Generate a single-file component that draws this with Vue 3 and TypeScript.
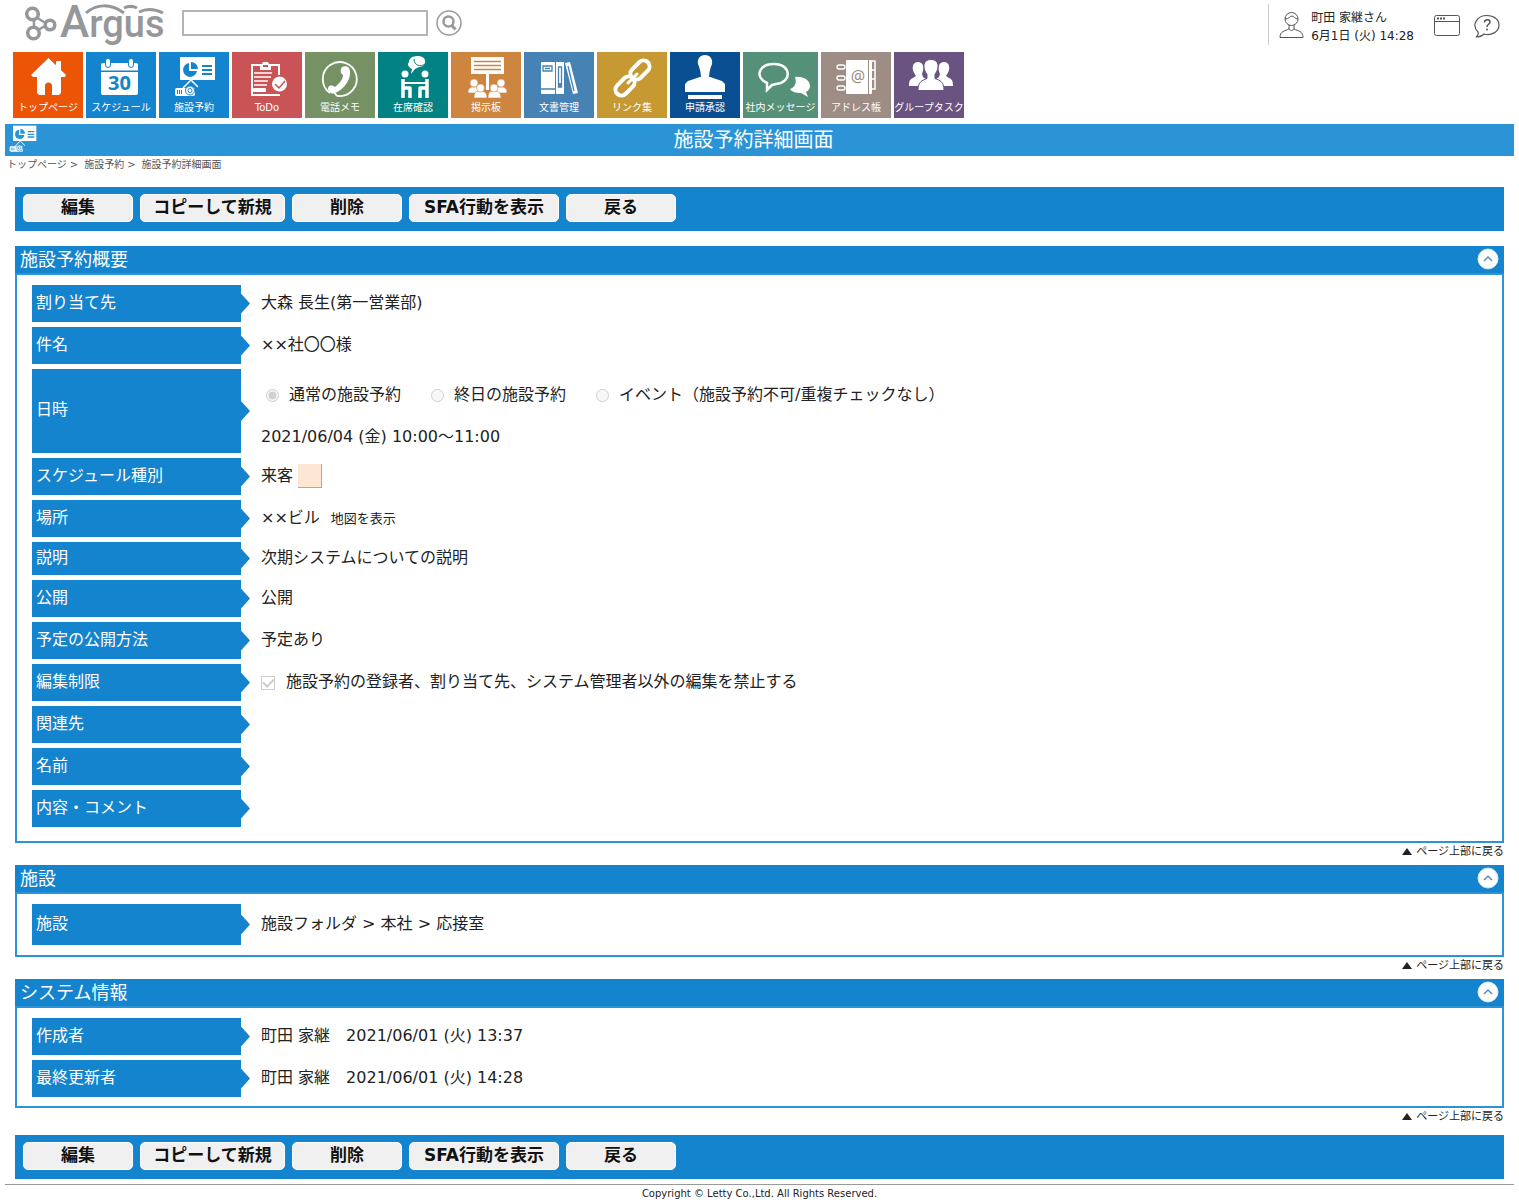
<script setup lang="ts">
import { ref } from 'vue'

interface NavItem { id: string; label: string; color: string; wide?: boolean }
interface Row { label: string; kind?: string; value?: string }
interface Section { id: string; title: string; rows: Row[] }

const keyword = ref('')

const navItems: NavItem[] = [
  { id: 'home', label: 'トップページ', color: '#eb5505' },
  { id: 'calendar', label: 'スケジュール', color: '#1584ce' },
  { id: 'facility', label: '施設予約', color: '#1584ce' },
  { id: 'todo', label: 'ToDo', color: '#c95355' },
  { id: 'phone', label: '電話メモ', color: '#769164' },
  { id: 'presence', label: '在席確認', color: '#028282' },
  { id: 'board', label: '掲示板', color: '#cd853f' },
  { id: 'docs', label: '文書管理', color: '#4682b4' },
  { id: 'link', label: 'リンク集', color: '#c79932' },
  { id: 'stamp', label: '申請承認', color: '#0b4f93' },
  { id: 'message', label: '社内メッセージ', color: '#559079', wide: true },
  { id: 'address', label: 'アドレス帳', color: '#9e8d85' },
  { id: 'group', label: 'グループタスク', color: '#6a5380' },
]

const actions = [
  { label: '編集', size: 'short' },
  { label: 'コピーして新規', size: 'medium' },
  { label: '削除', size: 'short' },
  { label: 'SFA行動を表示', size: 'long' },
  { label: '戻る', size: 'short' },
]

const dateKinds = ['通常の施設予約', '終日の施設予約', 'イベント（施設予約不可/重複チェックなし）']

const sections: Section[] = [
  {
    id: 'summary',
    title: '施設予約概要',
    rows: [
      { label: '割り当て先', value: '大森 長生(第一営業部)' },
      { label: '件名', value: '××社〇〇様' },
      { label: '日時', kind: 'date', value: '2021/06/04 (金) 10:00～11:00' },
      { label: 'スケジュール種別', kind: 'color', value: '来客' },
      { label: '場所', kind: 'place', value: '××ビル' },
      { label: '説明', kind: 'note', value: '次期システムについての説明' },
      { label: '公開', value: '公開' },
      { label: '予定の公開方法', value: '予定あり' },
      { label: '編集制限', kind: 'limit', value: '施設予約の登録者、割り当て先、システム管理者以外の編集を禁止する' },
      { label: '関連先' },
      { label: '名前' },
      { label: '内容・コメント' },
    ],
  },
  { id: 'facility', title: '施設', rows: [{ label: '施設', kind: 'tall', value: '施設フォルダ > 本社 > 応接室' }] },
  {
    id: 'system',
    title: 'システム情報',
    rows: [
      { label: '作成者', value: '町田 家継　2021/06/01 (火) 13:37' },
      { label: '最終更新者', value: '町田 家継　2021/06/01 (火) 14:28' },
    ],
  },
]

const closed = ref<string[]>([])
function toggle(id: string) {
  closed.value = closed.value.includes(id) ? closed.value.filter((c) => c !== id) : [...closed.value, id]
}
</script>

<template>
  <div id="top" class="page">
    <svg class="defs" width="0" height="0" aria-hidden="true">
      <symbol id="projector" viewBox="15 4 42 42">
        <path fill="#fff" d="M21 5h35v23H21z" />
        <path fill="var(--tile)" d="M30 11v8h8a7 7 0 1 1-8-8z M32 10a7 7 0 0 1 7 7h-7z" />
        <path stroke="var(--tile)" stroke-width="2" d="M43 14h10M43 18h10M43 22h10" />
        <path stroke="#fff" stroke-width="1.500" fill="none" d="M32 28l-8 8M32 28l7 7" />
        <rect x="16" y="36" width="20" height="8" rx="2" fill="#fff" />
        <circle cx="31" cy="38.500" r="4.500" fill="#fff" stroke="var(--tile)" />
        <circle cx="31" cy="38.500" r="2" fill="none" stroke="var(--tile)" />
        <path stroke="var(--tile)" d="M18.500 38v4M20.500 38v4M22.500 38v4" />
      </symbol>
    </svg>

    <header class="header">
      <a href="#top" class="logo" aria-label="Argus">
        <svg width="144" height="52" viewBox="0 0 144 52">
          <g fill="none" stroke="#96979b" stroke-width="3.500">
            <circle cx="8.500" cy="14" r="5.800" />
            <circle cx="26" cy="25" r="4.800" />
            <circle cx="9.500" cy="33" r="5.800" />
            <path stroke-width="2.500" d="M13.500 18l8 5M14 30l7-4M10 20v7" />
            <path stroke-width="3" d="M62 13C72 4 86 3 100 13" />
            <path stroke-width="3" d="M100 8c4-2 9-2 13 0" />
            <path stroke-width="3" d="M115 12c8-4 16-3 24 1" />
          </g>
          <text x="36" y="37" class="logo-text"><tspan font-size="44">A</tspan><tspan font-size="38">rgus</tspan></text>
        </svg>
      </a>
      <form class="search" role="search" @submit.prevent>
        <input v-model="keyword" type="text" aria-label="検索" class="search-box" />
        <button type="submit" class="icon-button" aria-label="検索する">
          <svg width="26" height="26" viewBox="0 0 26 26" fill="none" stroke="#999">
            <circle cx="13" cy="13" r="12" stroke-width="1.500" />
            <circle cx="12.500" cy="11.500" r="5" stroke-width="2.500" />
            <path stroke-width="3" d="M15.500 15l4 4.500" />
          </svg>
        </button>
      </form>
      <div class="account">
        <svg width="25" height="28" viewBox="0 0 25 28" fill="none" stroke="#555">
          <circle cx="12.500" cy="8" r="6.500" />
          <path d="M6 8c4 0 5-3 7-3s3 3 6 3M10 14v4c-4 2-9 2-9 8.500h23c0-6.500-5-6.500-9-8.500v-4M10 18c2 2 3 2 5 0" />
        </svg>
        <div class="who"><span>町田 家継さん</span><span>6月1日 (火) 14:28</span></div>
        <button type="button" class="icon-button window" aria-label="ウィンドウ">
          <svg width="26" height="22" viewBox="0 0 26 22" fill="none" stroke="#555">
            <rect x=".5" y=".5" width="25" height="20" rx="2" />
            <path d="M1 6.500h24" />
            <path stroke-width="2" stroke-dasharray="2 1" d="M3 3.500h8" />
          </svg>
        </button>
        <button type="button" class="icon-button help" aria-label="ヘルプ">
          <svg width="26" height="26" viewBox="0 0 26 26" fill="none" stroke="#555">
            <path stroke-width="1.200" d="M4 18C-3 11 3 1.500 13 1.500c7 0 12 4 12 9.500 0 7-8 11-15 9-2 2-5 3-8 3 2-1 2.500-3 2-5z" />
            <path stroke-width="1.500" d="M10.500 8.500c0-4 5.500-3.500 5.500-.5 0 2.500-3 2-3 5M13 14.500v2" />
          </svg>
        </button>
      </div>
    </header>

    <nav class="nav">
      <a
        v-for="item in navItems" :key="item.id" href="#top" class="tile"
        :class="{ wide: item.wide }" :style="{ '--tile': item.color }"
      >
        <svg class="tile-icon" width="70" height="48" viewBox="0 0 70 48" fill="#fff" aria-hidden="true">
          <template v-if="item.id === 'home'">
            <path d="M35.500 6L53 23l-1 2h-4v16l-2 2h-7V34a3.500 3.500 0 0 0-7 0v9h-6l-2-2V25h-4l-2-2z M43 9h5v10l-5-5z" />
          </template>
          <template v-else-if="item.id === 'calendar'">
            <rect x="15" y="11" width="37" height="32" rx="2" />
            <path :fill="item.color" d="M15 18.500h37v1.500H15z" />
            <g :stroke="item.color"><rect x="19.500" y="6.500" width="5" height="9" rx="2.500" /><rect x="42.500" y="6.500" width="5" height="9" rx="2.500" /></g>
            <text x="33.500" y="38" text-anchor="middle" class="cal" :fill="item.color">30</text>
          </template>
          <use v-else-if="item.id === 'facility'" href="#projector" x="15" y="4" width="42" height="42" />
          <template v-else-if="item.id === 'todo'">
            <path fill="none" stroke="#fff" stroke-width="2" d="M28 13h-8v30h28M39 13h8v10" />
            <path fill-rule="evenodd" d="M28 12h2l1-2h5l1 2h2v6H28zM31 13v2h5v-2z" />
            <path stroke="#fff" stroke-width="1.500" d="M22 21h18M22 25h17M22 29h14M22 33h13" />
            <rect x="21" y="36" width="13" height="4" rx="1" />
            <circle cx="47.500" cy="32" r="7.500" />
            <path fill="none" :stroke="item.color" stroke-width="1.500" d="M43 32l4 4 6-7" />
          </template>
          <template v-else-if="item.id === 'phone'">
            <path fill="none" stroke="#fff" stroke-width="1.800" d="M25 41a17 17 0 1 1 8 3c-3 0-2-3-4-4" />
            <path d="M36 17c0-3 6-4 8-1 4 9-4 21-14 25-3 2-7-1-7-5 1-3 4-3 7-1 5-4 8-8 8-12-2-1-3-4-2-6z" />
          </template>
          <template v-else-if="item.id === 'presence'">
            <circle cx="27" cy="22" r="3.500" /><circle cx="47" cy="22" r="3.500" />
            <path d="M40 4c5 0 8 3 7 7-1 3-4 4-6 4l-4 2-4 5 1-5c-4-2-5-5-3-7 0-4 4-6 9-6z" />
            <path fill="none" :stroke="item.color" d="M36 7c0 7 7 8 11 5" />
            <path fill="none" stroke="#fff" stroke-width="3.500" stroke-linejoin="round" d="M25 27v9h7v10M49 27v9h-7v10M25 36v10M49 36v10" />
            <path stroke="#fff" stroke-width="2" d="M26 31h22" />
          </template>
          <template v-else-if="item.id === 'board'">
            <path d="M20 5h33v17H38v16h-3V22H20z" />
            <path :stroke="item.color" stroke-width="1.500" d="M23 9.500h27M23 13.500h27M23 17.500h27" />
            <g :stroke="item.color" stroke-width=".6">
              <path d="M17 41c0-5 2-6 6-6s6 1 6 6zM44 41c0-5 2-6 6-6s6 1 6 6z" />
              <circle cx="23" cy="31" r="4" /><circle cx="50" cy="31" r="4" />
              <path d="M23 46c0-6 2-7 6-7s7 1 7 7zM37 46c0-6 2-7 6-7s7 1 7 7z" />
              <circle cx="29.500" cy="36" r="4" /><circle cx="43" cy="36" r="4" />
            </g>
          </template>
          <template v-else-if="item.id === 'docs'">
            <rect x="17" y="10" width="14" height="32" rx="1" />
            <path d="M32 10h8v32h-8zM41 11l5-1 8 31-5 1z" />
            <path fill="none" :stroke="item.color" stroke-width="1.300" d="M19 14h9v5h-9zM21 16.500h5M17 37h14M34.500 15h3v20h-3zM44 14l6 25" />
            <circle cx="36" cy="33" r="2" :fill="item.color" />
          </template>
          <g v-else-if="item.id === 'link'" fill="none" stroke="#fff" stroke-width="4">
            <rect x="-11" y="-6" width="22" height="12" rx="6" transform="translate(28 34) rotate(-45)" />
            <rect x="-11" y="-6" width="22" height="12" rx="6" transform="translate(43 18) rotate(-45)" />
            <path stroke-linecap="round" stroke-width="3" d="M31 31l9-9" />
          </g>
          <template v-else-if="item.id === 'stamp'">
            <path d="M35 3c5 0 8 4 7 9-2 5-3 9-3 15h-8c0-6-1-10-3-15-1-5 2-9 7-9zM18 29l12-4h10l12 4 3 3v8H15v-8zM18 43h34v4H18z" />
          </template>
          <template v-else-if="item.id === 'message'">
            <path d="M44 37c5-2 7-6 5-12 8-1 15 3 15 9 0 3-2 5-4 6l2 5-7-4c-5 0-9-1-11-4z" />
            <path :fill="item.color" stroke="#fff" stroke-width="2.500" d="M28 12c18 0 18 19 2 20l-4 1-5 5v-7c-13-6-8-19 7-19z" />
          </template>
          <template v-else-if="item.id === 'address'">
            <rect x="25" y="8" width="26" height="34" rx="1" />
            <path fill="none" stroke="#fff" stroke-width="1.500" d="M51 9h3v9h-3M51 18h3v9h-3M51 27h3v10h-3" />
            <path :stroke="item.color" d="M47.500 8v34" />
            <g :fill="item.color" stroke="#fff" stroke-width="1.300"><rect x="16" y="13" width="8" height="4" rx="2" /><rect x="16" y="24" width="8" height="4" rx="2" /><rect x="16" y="34" width="8" height="4" rx="2" /></g>
            <text x="37" y="30" text-anchor="middle" font-size="16" :fill="item.color" class="latin">@</text>
          </template>
          <template v-else>
            <path d="M24 10c5 0 7 5 4 12l1 3 4 3v6H15c0-5 1-7 4-8l3-2c-6-8-3-14 2-14zM50 10c-5 0-7 5-4 12l-1 3-4 3v6h18c0-5-1-7-4-8l-3-2c6-8 3-14-2-14z" />
            <path :stroke="item.color" d="M37 7.500c8 0 9 8 4 15v4c5 2 9 3 9 12H24c0-9 4-10 9-12v-4c-5-7-4-15 4-15z" />
          </template>
        </svg>
        <span class="tile-label">{{ item.label }}</span>
      </a>
    </nav>

    <div class="title-bar">
      <svg class="title-icon" width="28" height="28" aria-hidden="true"><use href="#projector" width="28" height="28" /></svg>
      <h1>施設予約詳細画面</h1>
    </div>
    <nav class="crumbs" aria-label="パンくず">
      <a href="#top">トップページ</a><span>&gt;</span><a href="#top">施設予約</a><span>&gt;</span><a href="#top">施設予約詳細画面</a>
    </nav>

    <main class="main">
      <div class="actions">
        <button v-for="a in actions" :key="a.label" type="button" :class="a.size">{{ a.label }}</button>
      </div>

      <template v-for="section in sections" :key="section.id">
        <section class="panel" :class="section.id">
          <div class="panel-head">
            <h2>{{ section.title }}</h2>
            <button type="button" class="icon-button" :aria-label="section.title + 'を開閉'" @click="toggle(section.id)">
              <svg width="22" height="22" viewBox="0 0 22 22">
                <circle cx="11" cy="11" r="10" fill="#fff" stroke="#d5e6f5" />
                <path fill="none" stroke="#5a8cc6" stroke-width="1.500" d="M7 13l4-4 4 4" />
              </svg>
            </button>
          </div>
          <dl v-show="!closed.includes(section.id)" class="rows">
            <div v-for="row in section.rows" :key="row.label" class="row" :class="row.kind">
              <dt>{{ row.label }}</dt>
              <dd v-if="row.kind === 'date'">
                <div class="radios">
                  <label v-for="(kind, i) in dateKinds" :key="kind">
                    <input type="radio" name="kind" :checked="i === 0" disabled />{{ kind }}
                  </label>
                </div>
                <div class="when">{{ row.value }}</div>
              </dd>
              <dd v-else-if="row.kind === 'color'">{{ row.value }}<span class="swatch"></span></dd>
              <dd v-else-if="row.kind === 'place'">{{ row.value }}<a href="#top" class="map">地図を表示</a></dd>
              <dd v-else-if="row.kind === 'limit'">
                <label><input type="checkbox" checked disabled />{{ row.value }}</label>
              </dd>
              <dd v-else>{{ row.value }}</dd>
            </div>
          </dl>
        </section>
        <div class="back"><a href="#top"><svg width="10" height="8" aria-hidden="true"><path fill="#222" d="M5 0l5 7H0z" /></svg>ページ上部に戻る</a></div>
      </template>

      <div class="actions bottom">
        <button v-for="a in actions" :key="a.label" type="button" :class="a.size">{{ a.label }}</button>
      </div>
    </main>

    <footer class="footer">Copyright © Letty Co.,Ltd. All Rights Reserved.</footer>
  </div>
</template>

<style>
body { background: #fff; }
</style>

<style scoped>
.page { font-family: "DejaVu Sans", "Noto Sans CJK JP", sans-serif; font-size: 16px; color: #222; padding: 0 5px; }
.page *, .page { box-sizing: border-box; }
a { color: inherit; text-decoration: none; }
h1, h2, dl, dd { margin: 0; font-weight: 400; }
.defs { position: absolute; }
svg { display: block; flex: none; }
.icon-button { border: 0; padding: 0; background: none; cursor: pointer; }

.header { display: flex; height: 52px; align-items: flex-start; padding-left: 19px; }
.logo-text { font-family: Roboto, sans-serif; font-weight: 500; fill: #96979b; }
.search { display: flex; align-items: center; gap: 8px; margin: 10px 0 0 14px; }
.search-box { width: 246px; height: 26px; border: 2px solid #b4b4b4; padding: 0 4px; font-size: 14px; background: #fff; }
.account { display: flex; align-items: center; margin: 4px 14px 0 auto; height: 41px; border-left: 1px solid #ccc; padding-left: 10px; }
.who { display: flex; flex-direction: column; font-size: 12px; line-height: 18px; margin: 0 20px 0 7px; padding-top: 5px; }
.window { margin-right: 14px; padding-top: 2px; }
.help { padding-top: 4px; }

.nav { display: flex; gap: 3px; padding-left: 8px; margin-bottom: 6px; }
.tile { width: 70px; height: 66px; background: var(--tile); color: #fff; display: flex; flex-direction: column; align-items: center; }
.tile.wide { width: 75px; }
.tile-label { font-size: 10px; line-height: 16px; white-space: nowrap; }
.cal { font: 700 20px "Open Sans", sans-serif; }
.latin { font-family: "Noto Sans", sans-serif; }

.title-bar { position: relative; height: 32px; background: #2b94d7; --tile: #2b94d7; color: #fff; }
.title-bar h1 { font-size: 20px; line-height: 32px; text-align: center; padding-right: 12px; }
.title-icon { position: absolute; left: 4px; top: 1px; }
.crumbs { display: flex; gap: 3px; height: 16px; font-size: 10px; line-height: 18px; color: #555; padding-left: 2px; }
.crumbs span { margin-right: 3px; }

.main { padding: 15px 10px 0; }
.actions { display: flex; gap: 7px; height: 44px; padding: 7px 8px 9px; background: #1584ce; margin-bottom: 15px; }
.actions.bottom { margin: 5px 0; }
.actions button { font: 700 17px/24px "DejaVu Sans", "Noto Sans CJK JP", sans-serif; color: #111; background: #f0f0f0; border: 1px solid #fff; border-radius: 5px; padding: 0 0 2px; white-space: nowrap; }
.short { width: 110px; }
.medium { width: 145px; }
.long { width: 150px; }

.panel { border: 2px solid #2b94d7; border-top: 0; }
.panel-head { display: flex; justify-content: space-between; align-items: center; height: 29px; margin: 0 -2px; padding: 0 5px 1px; background: #1584ce; border-bottom: 2px solid #2b94d7; color: #fff; }
.panel-head h2 { font-size: 18px; line-height: 26px; padding-top: 2px; }
.rows { display: flex; flex-direction: column; gap: 5px; padding: 10px 15px; }
.summary .rows { padding-bottom: 14px; }
.system .rows { padding-bottom: 9px; }
.row { display: flex; gap: 20px; min-height: 37px; }
.row.date { min-height: 84px; }
.row.note { min-height: 33px; }
.row.tall { min-height: 41px; }
dt { position: relative; width: 209px; flex: none; display: flex; align-items: center; padding: 0 4px 2px; background: #1584ce; color: #fff; line-height: 24px; }
dt::after { content: ""; position: absolute; left: 100%; top: calc(50% - 10px); width: 9px; height: 20px; background: #1584ce; clip-path: polygon(0 0, 100% 50%, 0 100%); }
dd { display: flex; align-items: center; flex: 1; padding-bottom: 2px; line-height: 24px; }
.date dd { flex-direction: column; align-items: flex-start; padding: 5px 0; }
.radios { display: flex; gap: 25px; height: 42px; align-items: center; }
.when { height: 32px; line-height: 42px; }
label { display: flex; align-items: center; }
input[type="radio"] { width: 13px; height: 13px; margin: 0 10px 0 5px; }
input[type="checkbox"] { appearance: none; width: 14px; height: 14px; margin: 3px 11px 0 0; border: 1px solid #ccc; display: grid; place-items: center; }
input[type="checkbox"]:checked::before { content: ""; width: 9px; height: 5px; border: solid #ccc; border-width: 0 0 2px 2px; transform: rotate(-45deg); margin-bottom: 3px; }
.swatch { width: 24px; height: 24px; margin-left: 5px; background: #fee6d5; border: solid #aaa; border-width: 0 1px 1px 0; }
.map { font-size: 13px; margin-left: 11px; padding-top: 2px; }
.back { display: flex; justify-content: flex-end; height: 22px; font-size: 11px; line-height: 16px; }
.back a { display: flex; align-items: center; gap: 4px; height: 18px; }

.footer { border-top: 1px solid #999; text-align: center; font-size: 10px; line-height: 18px; }
</style>
